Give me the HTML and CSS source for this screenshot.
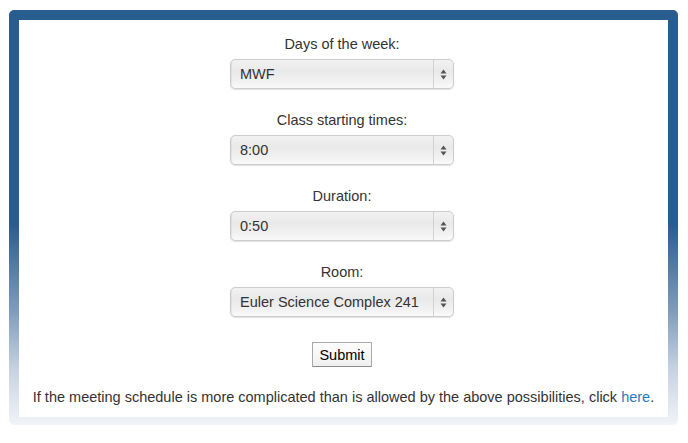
FILE: index.html
```html
<!DOCTYPE html>
<html>
<head>
<meta charset="utf-8">
<link rel="stylesheet" href="styles.css">
</head>
<body>
<div class="frame">
  <form class="panel">
    <div class="field">
      <label class="label">Days of the week:</label>
      <div class="select">
        <span class="value">MWF</span>
        <span class="arrows"><svg width="7" height="11" viewBox="0 0 7 11"><path d="M3.5 0.5 L6.5 4.5 H0.5 Z M3.5 10.5 L6.5 6.5 H0.5 Z" fill="#555"/></svg></span>
      </div>
    </div>
    <div class="field">
      <label class="label">Class starting times:</label>
      <div class="select">
        <span class="value">8:00</span>
        <span class="arrows"><svg width="7" height="11" viewBox="0 0 7 11"><path d="M3.5 0.5 L6.5 4.5 H0.5 Z M3.5 10.5 L6.5 6.5 H0.5 Z" fill="#555"/></svg></span>
      </div>
    </div>
    <div class="field">
      <label class="label">Duration:</label>
      <div class="select">
        <span class="value">0:50</span>
        <span class="arrows"><svg width="7" height="11" viewBox="0 0 7 11"><path d="M3.5 0.5 L6.5 4.5 H0.5 Z M3.5 10.5 L6.5 6.5 H0.5 Z" fill="#555"/></svg></span>
      </div>
    </div>
    <div class="field">
      <label class="label">Room:</label>
      <div class="select">
        <span class="value">Euler Science Complex 241</span>
        <span class="arrows"><svg width="7" height="11" viewBox="0 0 7 11"><path d="M3.5 0.5 L6.5 4.5 H0.5 Z M3.5 10.5 L6.5 6.5 H0.5 Z" fill="#555"/></svg></span>
      </div>
    </div>
    <button type="button" class="submit">Submit</button>
    <p class="note">If the meeting schedule is more complicated than is allowed by the above possibilities, click <a href="#">here</a>.</p>
  </form>
</div>
</body>
</html>
```
FILE: styles.css
```css
html, body {
  margin: 0;
  padding: 0;
  background: #fff;
}
body {
  font-family: "Liberation Sans", Arial, sans-serif;
  font-size: 14.5px;
  color: #333;
}
.frame {
  margin: 10px 10px 0 9px;
  width: 649px;
  height: 397px;
  padding: 10px 10px 8px 10px;
  border-radius: 5px;
  background: linear-gradient(to bottom, #2a5d8f 0px, #2a5d8f 215px, #7f9bbb 300px, #c7d3e1 360px, #f1f4f8 415px);
}
.panel {
  background: #fff;
  height: 397px;
  box-sizing: border-box;
  padding-top: 15px;
  display: flex;
  flex-direction: column;
  align-items: center;
}
.field {
  display: flex;
  flex-direction: column;
  align-items: center;
  margin-bottom: 22px;
  margin-left: -3px;
}
.field:nth-child(4) {
  margin-bottom: 23px;
}
.label {
  line-height: 18px;
  margin-bottom: 6px;
}
.select {
  width: 224px;
  height: 30px;
  box-sizing: border-box;
  border: 1px solid #cdcdcd;
  border-radius: 5px;
  background: linear-gradient(to bottom, #f2f2f2 0%, #e9e9e9 40%, #f1f1f1 75%, #fafafa 100%);
  box-shadow: inset 1px 0 1px rgba(0,0,0,0.06), 0 1px 1px rgba(0,0,0,0.12);
  display: flex;
  align-items: center;
  color: #333;
}
.value {
  flex: 1;
  padding-left: 9px;
  line-height: 28px;
}
.arrows {
  width: 19px;
  height: 28px;
  border-left: 1px solid #d2d2d2;
  display: flex;
  align-items: center;
  justify-content: center;
}
.submit {
  font-family: "Liberation Sans", Arial, sans-serif;
  font-size: 14.5px;
  color: #000;
  height: 25px;
  padding: 0 6px;
  margin: 2px 0 0 -3px;
  background: linear-gradient(to bottom, #fdfdfd, #f0f0f0);
  border: 1px solid #a9a9a9;
  border-bottom-color: #8c8c8c;
  border-radius: 1px;
}
.note {
  margin: 22px 0 0 0;
  line-height: 17px;
  color: #333;
}
.note a {
  color: #2a7bbf;
  text-decoration: none;
}
```
